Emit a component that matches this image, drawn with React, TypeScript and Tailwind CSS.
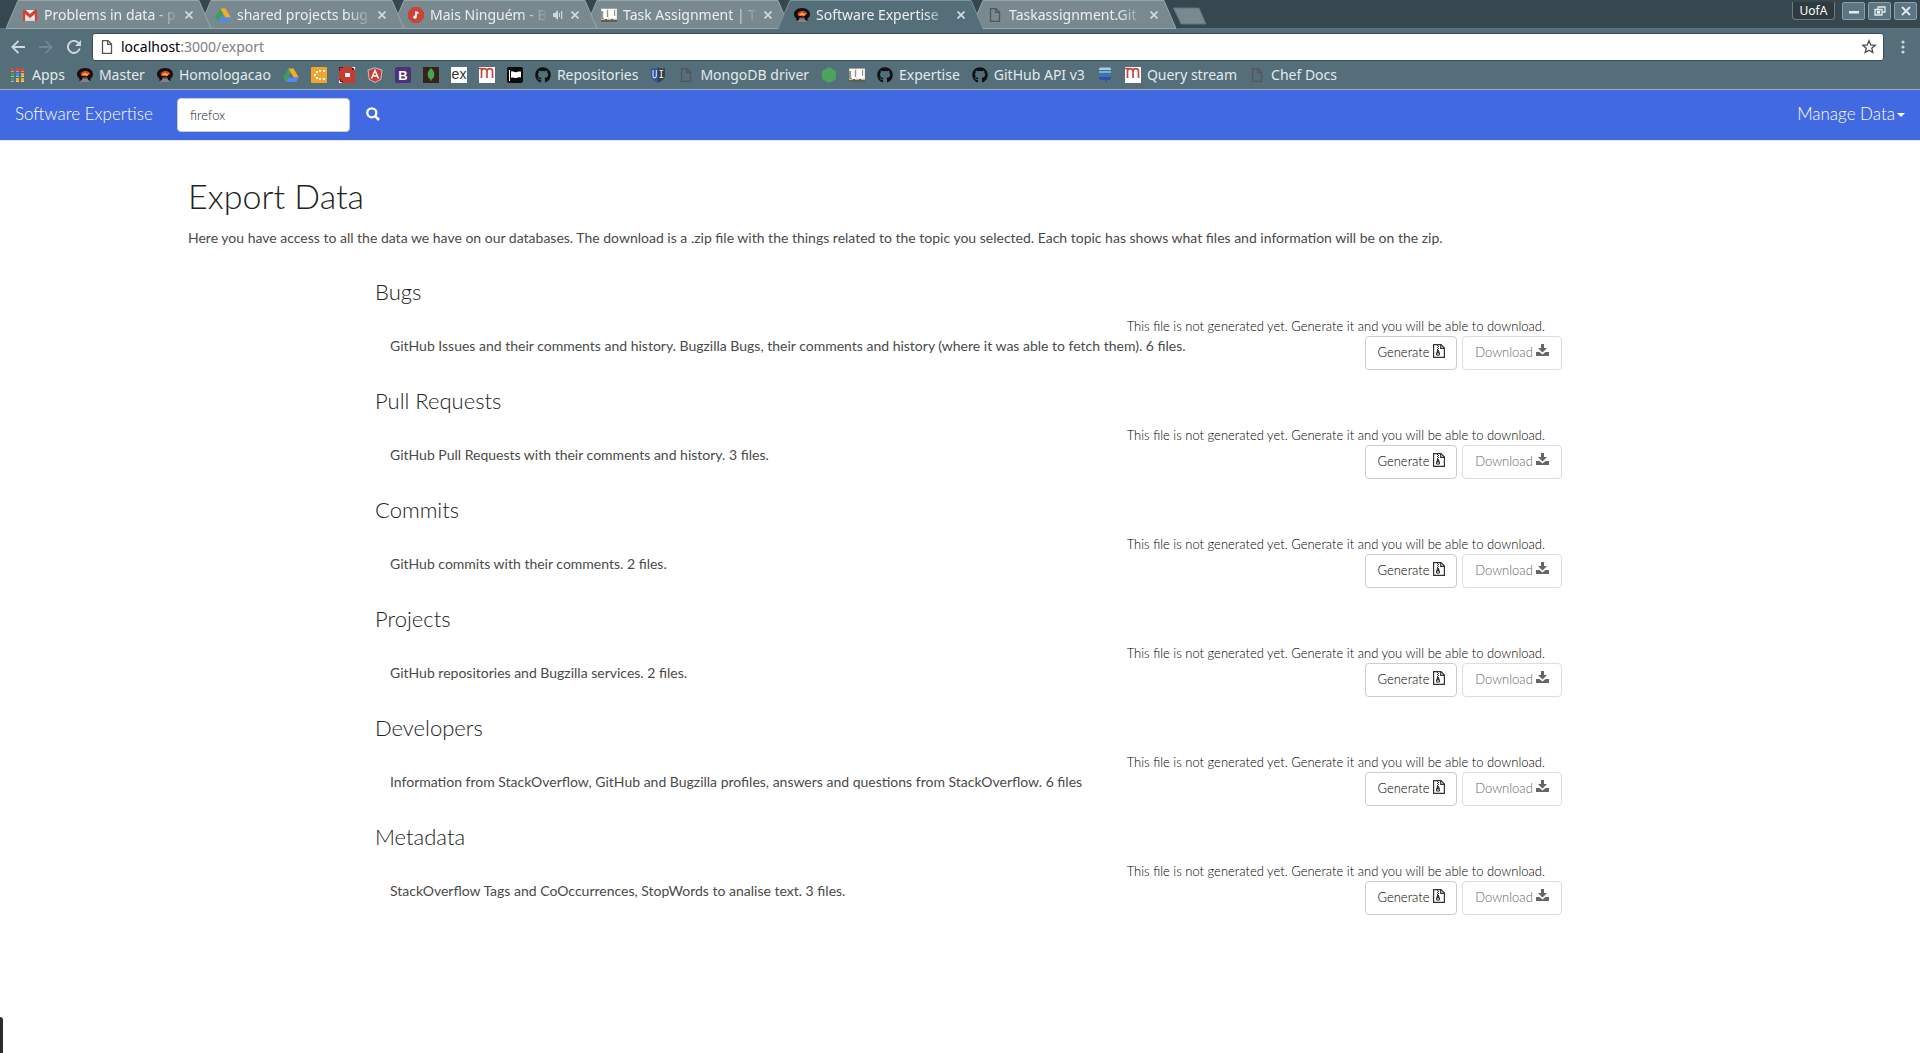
import React from "react";
import { FaGithub } from "react-icons/fa";

const icon = "block h-4 w-4 shrink-0";

function Gmail() {
  return (
    <svg className={icon} viewBox="0 0 16 16">
      <path d="M1 3h14v11H1z" fill="#f2f2f2" />
      <path d="M3 14l5-6 5 6z" fill="#dcdcdc" />
      <path d="M1 14V3.5L8 9.5l7-6V14h-2.2V7L8 11 3.2 7v7z" fill="#d6402f" />
      <path d="M1 2.5h2L8 7l5-4.5h2v2L8 10 1 4.5z" fill="#d6402f" />
    </svg>
  );
}
function Drive() {
  return (
    <svg className={icon} viewBox="0 0 16 16">
      <path d="M5.4 1.5L8 6 2.8 15 .2 10.5z" fill="#3f9f58" />
      <path d="M5.4 1.5h5.2L15.8 10.5h-5.2z" fill="#f5ad29" />
      <path d="M5.4 10.5h10.4L13.2 15H2.8z" fill="#5488ee" />
    </svg>
  );
}
function Music() {
  return (
    <svg className={icon} viewBox="0 0 16 16">
      <path d="M5 0h6l5 5v6l-5 5H5l-5-5V5z" fill="#cd4332" />
      <path d="M7.200 4l3.300 1v2L8.800 6.500v3.700a1.800 1.600 0 1 1-1.600-1.700z" fill="#fff" />
    </svg>
  );
}
function Board() {
  return (
    <svg className={icon} viewBox="0 0 16 16">
      <path d="M0 1h16v14H0z" fill="#ece8df" />
      <path d="M0 1h16v1H0z" fill="#a9a79c" />
      <path d="M0 4h2v7h1v1H0zM6 3h1v7H6zM13 3h1v6h-1z" fill="#8f968f" />
      <path d="M1 2h5v2H5v6h2v2H3V4H1zM8 2h5v7h2v2H8z" fill="#fff" />
      <path d="M0 12h16v3H0z" fill="#6a5848" />
      <path d="M0 12h4v1H0zM6 12h4v1H6zM12 12h4v1h-4z" fill="#c7b99f" />
      <path d="M2 13h3v2H2zM9 13h4v2H9z" fill="#456a58" />
    </svg>
  );
}
function Brain() {
  return (
    <svg className={icon} viewBox="0 0 16 16">
      <path d="M5 12h6l2 3H3z" fill="#8a8280" />
      <path d="M0 7c0-3 3-6 8-6s8 3 8 6c0 2-1 3.500-2.500 4.500V14L11 13l-.5-2.500h-5L5 13l-2.500 1v-2.500C1 11 0 9 0 7z" fill="#15100f" />
      <path d="M3.500 7C4 4.500 7 3.500 9.500 4c2 .4 3.500 1.500 3.500 3L9.500 9.500 7 9 4.500 9z" fill="#e23b1c" />
      <path d="M5 7.500l3-2 1.500 1.300 2.500-.5L10 9 8 8 6 8.700z" fill="#f9b233" />
      <path d="M7 4.500l3-.3-1 1.200z" fill="#5a8fc0" />
    </svg>
  );
}
function Doc({ color }: { color: string }) {
  return (
    <svg className={icon} viewBox="0 0 16 16" fill="none" stroke={color} strokeWidth="1.300">
      <path d="M3.500 1.600h5.500l3.500 3.400v9.400h-9z" />
      <path d="M8.700 1.600v3.700h3.800" />
    </svg>
  );
}
function Apps() {
  const colors = ["#db4437", "#db4437", "#db4437", "#3f9f58", "#2f96f3", "#f5ad29", "#3f9f58", "#f5ad29", "#f5ad29"];
  return (
    <svg className={icon} viewBox="0 0 16 16">
      {colors.map((c, i) => (
        <g key={i}>
          <rect x={1 + (i % 3) * 5} y={1 + Math.floor(i / 3) * 5} width="3" height="4" fill={c} />
          <rect x={1 + (i % 3) * 5} y={4 + Math.floor(i / 3) * 5} width="3" height="1" fill="#ffffff" opacity=".4" />
        </g>
      ))}
    </svg>
  );
}
function Dots() {
  return (
    <svg className={icon} viewBox="0 0 16 16">
      <rect width="16" height="16" rx="1" fill="#f3a52b" />
      <path d="M5 4h2v2H5zM8 3h2v2H8zM12 3h2v2h-2zM3 7h2v2H3zM5 10h2v2H5zM8 11h2v2H8zM12 11h2v2h-2z" fill="#fff" />
    </svg>
  );
}
function RedSquare() {
  return (
    <svg className={icon} viewBox="0 0 16 16">
      <rect width="16" height="16" fill="#fff" />
      <path d="M2 0h11l3 3v13H3l-3-3V2z" fill="#cb3a30" />
      <path d="M0 0h4v1H1v3H0zM13 1h2v2h-2zM1 12h1v2h2v1H1z" fill="#5a1a18" />
      <rect x="6" y="6" width="5" height="4" fill="#fff" />
    </svg>
  );
}
function Angular() {
  return (
    <svg className={icon} viewBox="0 0 16 16">
      <path d="M8 .2l7.500 2.600-1.200 9.700L8 16l-6.300-3.500L.5 2.800z" fill="#b8c4ca" />
      <path d="M8 1.200l6.400 2.200-1 8.500L8 14.900l-5.400-3-1-8.500z" fill="#cf3a31" />
      <path d="M4.500 11.500L8 3.500l3.500 8M5.800 9h4.400" fill="none" stroke="#fff" strokeWidth="1.500" />
    </svg>
  );
}
function Bootstrap() {
  return (
    <svg className={icon} viewBox="0 0 16 16">
      <rect width="16" height="16" rx="2.500" fill="#4f2f7a" />
      <text x="8" y="13" textAnchor="middle" fontFamily="Liberation Sans" fontWeight="700" fontSize="13" fill="#fff">B</text>
    </svg>
  );
}
function Mongo() {
  return (
    <svg className={icon} viewBox="0 0 16 16">
      <rect width="16" height="16" fill="#352317" />
      <path d="M8 1c3 3 3.500 5 3.300 7-.2 2-1.300 3.500-2.800 4.800L8.300 14h-.6l-.2-1.200C6 11.500 4.900 10 4.700 8 4.500 6 5 4 8 1z" fill="#45a452" />
    </svg>
  );
}
function Express() {
  return (
    <svg className={icon} viewBox="0 0 16 16">
      <rect width="16" height="16" fill="#fff" />
      <text x="8" y="12" textAnchor="middle" fontFamily="Liberation Sans" fontSize="14" fontWeight="400" fill="#333">ex</text>
    </svg>
  );
}
function Mongoose() {
  return (
    <svg className={icon} viewBox="0 0 16 16">
      <rect width="16" height="16" fill="#fff" />
      <path d="M0 1.500h2.500V11M2.500 4c.5-3.300 5-3.300 5.500 0v7M8 4c.5-3.300 5-3.300 5.500 0v7" fill="none" stroke="#c4473b" strokeWidth="1.700" />
    </svg>
  );
}
function Flag() {
  return (
    <svg className={icon} viewBox="0 0 16 16">
      <rect width="16" height="16" rx="2" fill="#0a0a0a" />
      <path d="M2 3h1v11H2zM4 4.500c2-1 3 1 5 .7s3-.9 5-.4v5.700c-2-.5-3 .3-5 .5s-3-1-5 0z" fill="#fff" />
    </svg>
  );
}
function Shield() {
  return (
    <svg className={icon} viewBox="0 0 16 16">
      <path d="M8 .5c2 1.200 4.500 1.500 7 .8v6.500c0 4-3 6.500-7 8z" fill="#3b4048" />
      <path d="M8 .5c-2 1.200-4.500 1.500-7 .8v6.500c0 4 3 6.500 7 8z" fill="#2b55a0" />
      <path d="M3 3v6c0 2.500 3.300 2.500 3.300 0V3M9.500 3.500h3.700M11.300 3.500v7M9.500 10.500h3.700" fill="none" stroke="#dfe6ee" strokeWidth="1.100" />
    </svg>
  );
}
function NodeHex() {
  return (
    <svg className={icon} viewBox="0 0 16 16">
      <path d="M8 0l7 4v8l-7 4-7-4V4z" fill="#4da35d" />
    </svg>
  );
}
function Stack() {
  return (
    <svg className={icon} viewBox="0 0 16 16">
      <path d="M3 .5h10l1 1V3H2V1.500z" fill="#a9cbe0" />
      <path d="M2 4h12v2H2z" fill="#62b6f0" />
      <path d="M2 7h12v2H2z" fill="#2f74d6" />
      <path d="M2 10h12v1.500L12.500 13H10.500l-2 3v-3H3.500L2 11.500z" fill="#2e52a4" />
    </svg>
  );
}
const Github = () => <FaGithub className="block h-4 w-4 shrink-0 text-[#111]" />;

function Cross() {
  return (
    <svg className="block h-2 w-2" viewBox="0 0 8 8" stroke="#cfd8dc" strokeWidth="1.800">
      <path d="M.5.5l7 7M7.500.5l-7 7" />
    </svg>
  );
}

type TabInfo = { title: string; icon: React.ReactNode; active?: boolean; sound?: boolean; z: string };

const tabs: TabInfo[] = [
  { title: "Problems in data - p", icon: <Gmail />, z: "z-[6]" },
  { title: "shared projects bug", icon: <Drive />, z: "z-[5]" },
  { title: "Mais Ninguém - B", icon: <Music />, sound: true, z: "z-[4]" },
  { title: "Task Assignment | T", icon: <Board />, z: "z-[3]" },
  { title: "Software Expertise", icon: <Brain />, active: true, z: "z-[7]" },
  { title: "Taskassignment.Git", icon: <Doc color="#555" />, z: "z-[1]" },
];

function Tab({ tab }: { tab: TabInfo }) {
  return (
    <div className={`relative -mr-3 flex h-[29px] w-[205px] items-center pl-4 pr-[18px] ${tab.z}`}>
      <svg className="absolute inset-0 h-full w-full" viewBox="0 0 205 29" preserveAspectRatio="none">
        <path d="M0 29L12 .5H193L205 29z" fill={tab.active ? "#546e7a" : "#788990"} />
        <path d="M0 28.500L12 .5H193L205 28.500" fill="none" stroke={tab.active ? "#7d929b" : "#98a6ac"} />
        {!tab.active && <path d="M0 28.500H205" stroke="#98a6ac" />}
      </svg>
      <span className="relative">{tab.icon}</span>
      <button
        type="button"
        className="relative ml-1.5 min-w-0 flex-1 overflow-hidden whitespace-nowrap text-left text-[14px] leading-5 text-[#eceff1] [mask-image:linear-gradient(to_right,black_calc(100%-28px),transparent)]"
      >
        {tab.title}
      </button>
      {tab.sound && (
        <svg className="relative ml-1 block h-[10px] w-[10px]" viewBox="0 0 10 10" fill="#cfd8dc">
          <path d="M0 3h2l3-3v10L2 7H0zM6 3h1v4H6zM8 1h1.200v8H8z" />
        </svg>
      )}
      <button type="button" aria-label={`Close ${tab.title}`} className={tab.sound ? "relative ml-2" : "relative ml-1"}>
        <Cross />
      </button>
    </div>
  );
}

const bookmarks: { label?: string; name: string; icon: React.ReactNode }[] = [
  { label: "Apps", name: "Apps", icon: <Apps /> },
  { label: "Master", name: "Master", icon: <Brain /> },
  { label: "Homologacao", name: "Homologacao", icon: <Brain /> },
  { name: "Drive", icon: <Drive /> },
  { name: "Dots", icon: <Dots /> },
  { name: "Square", icon: <RedSquare /> },
  { name: "Angular", icon: <Angular /> },
  { name: "Bootstrap", icon: <Bootstrap /> },
  { name: "MongoDB", icon: <Mongo /> },
  { name: "Express", icon: <Express /> },
  { name: "Mongoose", icon: <Mongoose /> },
  { name: "Flag", icon: <Flag /> },
  { label: "Repositories", name: "Repositories", icon: <Github /> },
  { name: "UI", icon: <Shield /> },
  { label: "MongoDB driver", name: "MongoDB driver", icon: <Doc color="#555" /> },
  { name: "Node", icon: <NodeHex /> },
  { name: "Task Assignment", icon: <Board /> },
  { label: "Expertise", name: "Expertise", icon: <Github /> },
  { label: "GitHub API v3", name: "GitHub API v3", icon: <Github /> },
  { name: "Stack Exchange", icon: <Stack /> },
  { label: "Query stream", name: "Query stream", icon: <Mongoose /> },
  { label: "Chef Docs", name: "Chef Docs", icon: <Doc color="#555" /> },
];

const windowButton =
  "flex h-[18px] w-[23px] items-center justify-center rounded-[2px] border border-[#8ba0a9] bg-[#5b7682]";

function Browser() {
  return (
    <div className="bg-[#546e7a] font-['Noto_Sans',sans-serif] font-normal">
      <div className="flex h-[29px] border-b border-[#5f737c] bg-[#37474f] pl-1.5">
        {tabs.map((t) => (
          <Tab key={t.title} tab={t} />
        ))}
        <button type="button" aria-label="New tab" className="ml-2 mt-[7px] h-[18px]">
          <svg className="block h-[18px] w-[36px]" viewBox="0 0 36 18">
            <path d="M1.500 1H27l7 16H9z" fill="#788990" stroke="#5f737c" />
          </svg>
        </button>
        <div className="ml-auto flex items-start gap-[3px] pr-[3px] pt-[2px]">
          <button
            type="button"
            className="mr-1 h-[18px] w-[43px] rounded-b-[4px] border border-t-0 border-[#6d7b82] bg-[#2f3a40] text-[12px] leading-4 text-white"
          >
            UofA
          </button>
          <button type="button" aria-label="Minimize" className={windowButton}>
            <svg className="block h-3 w-3" viewBox="0 0 12 12">
              <path d="M1 6h10v2.500H1z" fill="#e4eaed" />
            </svg>
          </button>
          <button type="button" aria-label="Restore" className={windowButton}>
            <svg className="block h-3 w-3" viewBox="0 0 12 12" fill="none" stroke="#e4eaed" strokeWidth="1.300">
              <path d="M4 4V2h7v5H8.500M1 4.500h7V10H1zM3.500 6.500h2v1.500h-2z" />
            </svg>
          </button>
          <button type="button" aria-label="Close" className={windowButton}>
            <svg className="block h-3 w-3" viewBox="0 0 12 12" stroke="#e4eaed" strokeWidth="1.800">
              <path d="M2 2l8 8M10 2l-8 8" />
            </svg>
          </button>
        </div>
      </div>
      <div className="flex h-8 items-center pl-[11px] pr-[15px] pt-1">
        <button type="button" aria-label="Back">
          <svg className="block h-[14px] w-[14px]" viewBox="0 0 14 14" fill="none" stroke="#cfd8dc" strokeWidth="1.900">
            <path d="M14 7H1.500M7.500 .8L1.300 7l6.200 6.200" />
          </svg>
        </button>
        <button type="button" aria-label="Forward" className="ml-[14px]">
          <svg className="block h-[14px] w-[14px]" viewBox="0 0 14 14" fill="none" stroke="#718791" strokeWidth="1.900">
            <path d="M0 7h12.500M6.500 .8L12.700 7l-6.200 6.200" />
          </svg>
        </button>
        <button type="button" aria-label="Reload" className="ml-[14px]">
          <svg className="block h-[14px] w-[14px]" viewBox="0 0 14 14">
            <path d="M12.700 8.500A6 6 0 1 1 11.300 2.800" fill="none" stroke="#cfd8dc" strokeWidth="1.900" />
            <path d="M14 0v6H8z" fill="#cfd8dc" />
          </svg>
        </button>
        <div className="ml-[11px] flex h-7 flex-1 items-center rounded-[3px] border border-[#3c4f58] bg-white pl-1.5 pr-1.5">
          <Doc color="#555" />
          <button type="button" className="ml-1.5 flex-1 text-left text-[14px] leading-5 text-[#808080]">
            <span className="text-black">localhost</span>:3000/export
          </button>
          <button type="button" aria-label="Bookmark this page">
            <svg className="block h-4 w-4" viewBox="0 0 16 16" fill="none" stroke="#4a4a4a" strokeWidth="1.300">
              <path d="M8 1.800l1.700 4.100 4.500.4-3.400 2.900 1 4.300L8 11.200l-3.800 2.300 1-4.300L1.800 6.300l4.500-.4z" />
            </svg>
          </button>
        </div>
        <button type="button" aria-label="Menu" className="ml-[17px]">
          <svg className="block h-[14px] w-1" viewBox="0 0 4 14" fill="#cfd8dc">
            <circle cx="2" cy="2" r="1.600" />
            <circle cx="2" cy="7" r="1.600" />
            <circle cx="2" cy="12" r="1.600" />
          </svg>
        </button>
      </div>
      <nav aria-label="Bookmarks" className="flex h-[29px] items-center gap-3 border-b border-[#a3adb3] pb-px pl-[10px] text-[14px] leading-5 text-[#e3e9ec]">
        {bookmarks.map((b) => (
          <a
            key={b.name}
            href="#"
            aria-label={b.name}
            className="flex items-center gap-1.5 whitespace-nowrap"
          >
            {b.icon}
            {b.label}
          </a>
        ))}
      </nav>
    </div>
  );
}

const topics = [
  { title: "Bugs", text: "GitHub Issues and their comments and history. Bugzilla Bugs, their comments and history (where it was able to fetch them). 6 files." },
  { title: "Pull Requests", text: "GitHub Pull Requests with their comments and history. 3 files." },
  { title: "Commits", text: "GitHub commits with their comments. 2 files." },
  { title: "Projects", text: "GitHub repositories and Bugzilla services. 2 files." },
  { title: "Developers", text: "Information from StackOverflow, GitHub and Bugzilla profiles, answers and questions from StackOverflow. 6 files" },
  { title: "Metadata", text: "StackOverflow Tags and CoOccurrences, StopWords to analise text. 3 files." },
];

function ZipIcon() {
  return (
    <svg className="block h-[14px] w-3" viewBox="0 0 12 14">
      <path d="M.6.6h7.400l3.400 3.400v9.400H.6z" fill="none" stroke="#333" strokeWidth="1.200" />
      <path d="M7.700.6v3.700h3.700" fill="none" stroke="#333" strokeWidth="1.200" />
      <path d="M4 1h1v1H4zM5 2h1v1H5zM4 3h1v1H4zM5 4h1v1H5zM4 5h1v1H4zM4.200 6h1.600l1.200 3.500c.4 1.300-.6 2.300-2 2.300s-2.400-1-2-2.300z" fill="#333" />
      <rect x="4" y="9.500" width="2" height="1" fill="#fff" />
    </svg>
  );
}
function DownloadIcon() {
  return (
    <svg className="block h-[13px] w-[13px]" viewBox="0 0 13 13" fill="currentColor">
      <path d="M5 0h3v4h3L6.500 8.500 2 4h3z" />
      <path d="M0 8h3.500l3 2.500 3-2.500H13v4H0z" />
    </svg>
  );
}

function Topic({ title, text }: { title: string; text: string }) {
  return (
    <section className="mb-[18px]">
      <h2 className="mb-[11px] text-[22px] leading-[26px]">{title}</h2>
      <p className="pr-[17px] text-right text-[13px] leading-5 text-black">
        This file is not generated yet. Generate it and you will be able to download.
      </p>
      <div className="flex items-start justify-between pl-[15px]">
        <p className="text-[14px] font-normal leading-5 text-[#4a4a4a]">{text}</p>
        <div className="flex gap-[5px]">
          <button type="button" className="flex h-[34px] w-[92px] justify-center gap-[3px] rounded-[4px] border border-[#ccc] bg-white pt-[7px] text-[13px] leading-4 text-black">
            Generate
            <ZipIcon />
          </button>
          <button type="button" disabled className="flex h-[34px] w-[100px] justify-center gap-[3px] rounded-[4px] border border-[#ddd] bg-white pt-[7px] text-[13px] leading-4 text-[#666]">
            Download
            <DownloadIcon />
          </button>
        </div>
      </div>
    </section>
  );
}

export default function App() {
  return (
    <div className="relative min-h-screen bg-white font-['Lato',sans-serif] font-light text-[#222]">
      <Browser />
      <header className="flex h-[51px] items-center border-b border-[#e7e7e7] bg-[#4169e1] pl-[15px] pr-[15px] text-white">
        <a href="#" className="w-[162px] pb-0.5 text-[17px] leading-5">Software Expertise</a>
        <form className="flex items-center" onSubmit={(e) => e.preventDefault()}>
          <input
            aria-label="Search"
            defaultValue="firefox"
            className="h-[34px] w-[173px] rounded-[4px] border border-[#ccc] bg-white px-3 text-[13px] text-[#222]"
          />
          <button type="submit" aria-label="Search" className="ml-4 pb-0.5">
            <svg className="block h-[14px] w-[14px]" viewBox="0 0 14 14" fill="none" stroke="#fff">
              <circle cx="5.800" cy="5.800" r="4.500" strokeWidth="2.300" />
              <path d="M9.200 9.200l3.800 3.800" strokeWidth="2.600" />
            </svg>
          </button>
        </form>
        <button type="button" className="ml-auto flex items-center gap-0.5 pb-0.5 text-[17px] leading-5">
          Manage Data
          <span className="mt-0.5 border-x-4 border-t-4 border-x-transparent border-t-white" />
        </button>
      </header>
      <main className="px-[188px] pt-[35px]">
        <h1 className="text-[34px] leading-10">Export Data</h1>
        <p className="mt-[10px] text-[14px] font-normal leading-6 text-[#4a4a4a]">
          Here you have access to all the data we have on our databases. The download is a .zip file with the things
          related to the topic you selected. Each topic has shows what files and information will be on the zip.
        </p>
        <div className="ml-[187px] mr-[170px] mt-[29px]">
          {topics.map((t) => (
            <Topic key={t.title} title={t.title} text={t.text} />
          ))}
        </div>
      </main>
      <div className="absolute bottom-0 left-0 h-9 w-[3px] rounded-tr-[3px] bg-[#2b2b2b]" />
    </div>
  );
}
